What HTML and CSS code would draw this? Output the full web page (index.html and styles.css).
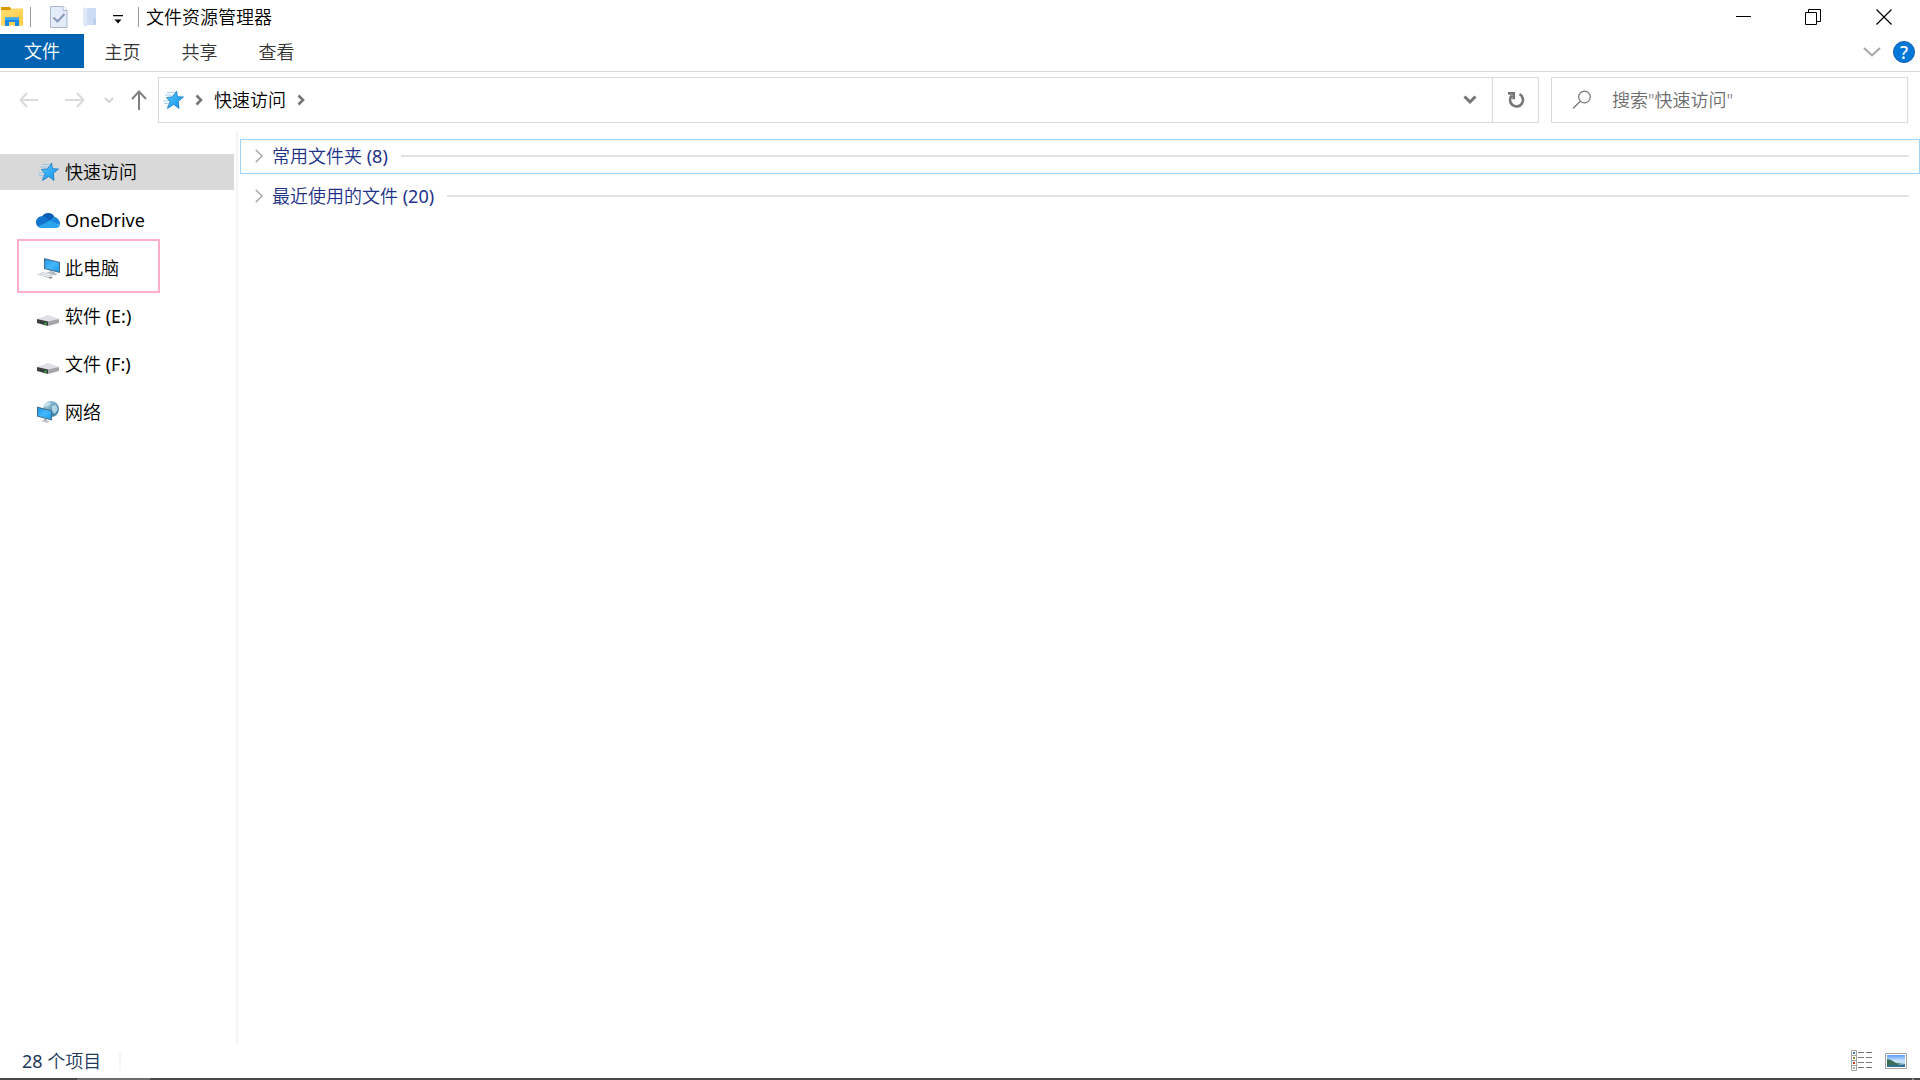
FILE: index.html
```html
<!DOCTYPE html>
<html lang="zh-CN">
<head>
<meta charset="utf-8">
<title>文件资源管理器</title>
<link rel="stylesheet" href="styles.css">
</head>
<body>
<svg class="defs" width="0" height="0" aria-hidden="true">
  <defs>
    <linearGradient id="starFill" x1="0" y1="0" x2="1" y2="1"><stop offset="0" stop-color="#5ccbff"/><stop offset="1" stop-color="#0d8eea"/></linearGradient>
    <linearGradient id="screenFill" x1="0" y1="0" x2="1" y2="1"><stop offset="0" stop-color="#2196e8"/><stop offset=".5" stop-color="#45b8fb"/><stop offset="1" stop-color="#1c9bf0"/></linearGradient>
    <linearGradient id="globeFill" x1="0" y1="0" x2="1" y2="1"><stop offset="0" stop-color="#b9dcea"/><stop offset="1" stop-color="#1f6d98"/></linearGradient>
    <linearGradient id="folderFill" x1="0" y1="0" x2="1" y2="1"><stop offset="0" stop-color="#ffdf79"/><stop offset="1" stop-color="#ffc93c"/></linearGradient>
    <linearGradient id="skyFill" x1="0" y1="0" x2="0" y2="1"><stop offset="0" stop-color="#5a9df5"/><stop offset=".5" stop-color="#cfe8fa"/><stop offset="1" stop-color="#7fb8dd"/></linearGradient>
    <symbol id="star" viewBox="0 0 22 20">
      <path d="M5 2.500h7M3 5h8M1 11h6M2 13.500h5M4 16h3" stroke="#8fc3ea" stroke-width=".8"/>
      <path d="M14.500 1l1 5.700 6 .300-5.200 4.300.700 7.200-5.300-4-6.200 4 2.500-6.800L4.500 7.500l6.200-.700z" fill="url(#starFill)" stroke="#1778c2" stroke-width=".8"/>
    </symbol>
    <symbol id="drive" viewBox="0 0 22 12">
      <path d="M0 5L11 1l11 4-11 4z" fill="#dfe0e3"/>
      <path d="M0 5l11 2.500V12L0 9z" fill="#3c3d40"/>
      <path d="M11 7.500L22 5v4L11 12z" fill="#a4a5a9"/>
      <path d="M7.500 8.500h2v2h-2z" fill="#25c03a"/>
    </symbol>
    <symbol id="chevron" viewBox="0 0 8 12"><path d="M1.500 1.500L6 6l-4.500 4.500" fill="none" stroke="#757575" stroke-width="2.600"/></symbol>
    <symbol id="expand" viewBox="0 0 8 14"><path d="M.700.700L7 7 .700 13.300" fill="none" stroke="#a0a0a0" stroke-width="1.300"/></symbol>
  </defs>
</svg>
<div class="window">
  <header class="titlebar">
    <svg class="app-icon" width="23" height="20" viewBox="0 0 23 20">
      <path d="M1 0h9l2 3H1z" fill="#d99a00"/>
      <path d="M1 3h9l2-1.500h11V18.500H1z" fill="url(#folderFill)"/>
      <path d="M5 19v-8.500h14V19h-4v-4H9v4z" fill="#1a8ae2"/>
      <path d="M5 10.500h14V13H5z" fill="#41a9f2"/>
    </svg>
    <span class="rule"></span>
    <button class="quick check" aria-label="属性">
      <svg width="18" height="22" viewBox="0 0 18 22"><path d="M.5.500H13l4 4v17H.5z" fill="#e4ecf9" stroke="#aab6cf"/><path d="M13 .500v4h4" fill="#fff" stroke="#aab6cf"/><path d="M3.500 11.500l4 4L14.500 8" fill="none" stroke="#889bbd" stroke-width="2"/></svg>
    </button>
    <button class="quick folder" aria-label="新建文件夹">
      <svg width="15" height="20" viewBox="0 0 15 20"><path d="M5 1h9v17H5z" fill="#cddcf2"/><path d="M1 0l4 2v18l-4-2z" fill="#dfe8f7"/><path d="M11 11h3v7h-3z" fill="#bccfec"/></svg>
    </button>
    <button class="quick more" aria-label="自定义快速访问工具栏">
      <svg width="10" height="9" viewBox="0 0 10 9"><path d="M0 0h10v1.300H0zM1.500 4.500h7L5 8.500z" fill="#000"/></svg>
    </button>
    <span class="rule"></span>
    <h1 class="title">文件资源管理器</h1>
    <div class="controls">
      <button aria-label="最小化"><svg width="16" height="16"><path d="M0 7.500h15" stroke="#000"/></svg></button>
      <button aria-label="还原"><svg width="18" height="16" fill="none" stroke="#000"><path d="M.5 3.500h11v12H.5zM3.500 3.500v-3h12v12h-4"/></svg></button>
      <button aria-label="关闭"><svg width="16" height="16"><path d="M.5.500l15 15M15.500.500l-15 15" stroke="#000" stroke-width="1.200"/></svg></button>
    </div>
  </header>
  <nav class="ribbon">
    <button class="tab active">文件</button>
    <button class="tab">主页</button>
    <button class="tab">共享</button>
    <button class="tab">查看</button>
    <div class="ribbon-end">
      <button aria-label="展开功能区"><svg width="18" height="10"><path d="M1 1l8 7.500L17 1" fill="none" stroke="#a6a6a6" stroke-width="2"/></svg></button>
      <button class="help" aria-label="帮助">?</button>
    </div>
  </nav>
  <div class="toolbar">
    <div class="history">
      <button class="arrow" aria-label="后退"><svg width="20" height="16" fill="none" stroke="#dadada" stroke-width="2"><path d="M19 8H1.500M8 1L1.500 8 8 15"/></svg></button>
      <button class="arrow" aria-label="前进"><svg width="20" height="16" fill="none" stroke="#dadada" stroke-width="2"><path d="M0 8h18M12 1l6.500 7-6.500 7"/></svg></button>
      <button class="recent" aria-label="最近浏览的位置"><svg width="10" height="6" fill="none" stroke="#d4d4d4" stroke-width="2"><path d="M1 1l4 4 4-4"/></svg></button>
      <button class="up" aria-label="向上"><svg width="16" height="20" fill="none" stroke="#808080" stroke-width="2"><path d="M8 20V2M1 9l7-7.500L15 9"/></svg></button>
    </div>
    <div class="address">
      <svg width="22" height="20"><use href="#star"/></svg>
      <svg width="8" height="12"><use href="#chevron"/></svg>
      <a class="crumb" href="#quick">快速访问</a>
      <svg width="8" height="12"><use href="#chevron"/></svg>
      <button class="dropdown" aria-label="以前的位置"><svg width="14" height="10" fill="none" stroke="#757575" stroke-width="3"><path d="M1.500 1.500L7 7l5.500-5.500"/></svg></button>
      <button class="refresh" aria-label="刷新"><svg width="18" height="18" fill="none" stroke="#757575" stroke-width="2.600"><path d="M12.500 3.200A6.500 6.500 0 1 1 4.800 4.500"/><path d="M1 2.300h5.700v6" stroke-width="2.800"/></svg></button>
    </div>
    <label class="search">
      <svg width="20" height="20" fill="none" stroke="#777" stroke-width="1.200"><circle cx="12.500" cy="7" r="5.800"/><path d="M8.500 11L1 18.500"/></svg>
      <input type="text" aria-label="搜索" placeholder='搜索"快速访问"'>
    </label>
  </div>
  <div class="body">
    <nav class="sidebar">
      <a class="item selected" href="#quick"><span class="icon"><svg width="22" height="20"><use href="#star"/></svg></span>快速访问</a>
      <a class="item" href="#onedrive"><span class="icon"><svg width="24" height="16" viewBox="0 0 24 16"><path d="M6 4.500A7 7 0 0 1 18.500 5L14 9 5 8z" fill="#0b5cb5"/><path d="M6 4.300C2.500 4.300 0 7 0 10.300S2.500 16 5.500 16L15 9.300 10.500 5.800A8 8 0 0 0 6 4.300z" fill="#1274cf"/><path d="M18.500 5L13 8.500l6 3 5 1.500c.300-4-2-7.500-5.500-8z" fill="#1a86dd"/><path d="M2 14.500L14 8.700l9.800 4.500C23.300 15 22 16 20 16H5.500c-1.400 0-2.600-.600-3.500-1.500z" fill="#2aa4ea"/></svg></span><span class="latin">OneDrive</span></a>
      <a class="item framed" href="#pc"><span class="icon"><svg width="23" height="21" viewBox="0 0 23 21"><path d="M7 0l16 4v11L7 11z" fill="#476a85"/><path d="M8 1.200l14 3.500v9L8 10.200z" fill="url(#screenFill)"/><path d="M13 13l5 1.500v2.500l-5-1z" fill="#9aa5ad"/><path d="M9 14.500l4-1 8 2.500-3 1.500z" fill="#b8bfc4"/><path d="M0 16.500L6 14l10 3-5 3z" fill="#c5cbd0"/><path d="M2 16.500l11 2M5 15.200l9 2" stroke="#f1f3f5"/><path d="M11 19.500l3-1 2 1-3 1.500z" fill="#8f9aa2"/></svg></span>此电脑</a>
      <a class="item" href="#e"><span class="icon low"><svg width="22" height="12"><use href="#drive"/></svg></span><span>软件 <span class="latin">(E:)</span></span></a>
      <a class="item" href="#f"><span class="icon low"><svg width="22" height="12"><use href="#drive"/></svg></span><span>文件 <span class="latin">(F:)</span></span></a>
      <a class="item" href="#network"><span class="icon"><svg width="22" height="22" viewBox="0 0 22 22"><circle cx="14" cy="8" r="8" fill="url(#globeFill)"/><path d="M7 4c2-3 5-3 7-2l-2 3-4 1zM15 5l4-1 2 4-3 5-3-3z" fill="#e1f1f6" opacity=".65"/><path d="M0 5.500l15 4v10L0 15.500z" fill="#416e8f"/><path d="M1 6.900l13 3.400v8L1 14.800z" fill="url(#screenFill)"/><path d="M7 17.500l3 1v1.500H7z" fill="#9aa5ad"/><path d="M4 20l3-1 6 1.500-3 1.500z" fill="#c0c6ca"/></svg></span>网络</a>
    </nav>
    <main class="content">
      <button class="group focused"><svg width="8" height="14"><use href="#expand"/></svg><span>常用文件夹 <span class="latin">(8)</span></span></button>
      <button class="group"><svg width="8" height="14"><use href="#expand"/></svg><span>最近使用的文件 <span class="latin">(20)</span></span></button>
    </main>
  </div>
  <footer class="status">
    <span class="count"><span class="latin">28</span> 个项目</span>
    <div class="views">
      <button aria-label="详细信息"><svg width="22" height="22" viewBox="0 0 22 22"><g fill="#fff" stroke="#a3a3a3"><path d="M.500.500h5v5h-5zM.500 5.500h5v5h-5zM.500 10.500h5v5h-5zM.500 15.500h5v5h-5z"/></g><path d="M2 2h2v2H2z" fill="#3b78c4"/><path d="M2 7h2v2H2z" fill="#8b8b31"/><path d="M2 12h2v2H2z" fill="#c33a1c"/><path d="M2 17h2v2H2z" fill="#8fb08a"/><path d="M7 2.500h6M15 2.500h6M7 7.500h6M15 7.500h6M7 12.500h6M15 12.500h6M7 17.500h6M15 17.500h6" stroke="#777"/></svg></button>
      <button aria-label="大图标"><svg width="22" height="16" viewBox="0 0 22 16"><path d="M.5.500h21v15H.5z" fill="#fff" stroke="#a3a3a3"/><path d="M2 2h18v12H2z" fill="url(#skyFill)"/><path d="M2 6l4 1 5 3 7 1-6 1H2z" fill="#3d6f57"/><path d="M2 12h14l4-1v3H2z" fill="#2f7192"/></svg></button>
    </div>
  </footer>
  <div class="taskbar-edge"><span class="lit"></span><span class="tick"></span></div>
</div>
</body>
</html>
```
FILE: styles.css
```css
* { box-sizing: border-box; }
body {
  margin: 0;
  background: #fff;
  color: #000;
  font: 350 18px/24px "Noto Sans", "Noto Sans CJK SC", sans-serif;
}
svg { display: block; flex: none; }
.defs { position: absolute; }
button {
  display: flex;
  align-items: center;
  justify-content: center;
  padding: 0;
  border: 0;
  background: none;
  color: inherit;
  font: inherit;
}
a { color: inherit; text-decoration: none; }
.latin { font-weight: 400; }

.window { display: flex; flex-direction: column; min-height: 100vh; }

.titlebar { display: flex; align-items: center; height: 34px; }
.rule { width: 1px; height: 20px; margin-left: 7px; background: #9a9a9a; }
.check { margin-left: 19px; }
.folder { margin-left: 14px; }
.more { margin: 4px 8px 0 16px; }
.title { margin: 0 0 0 7px; font-size: 18px; font-weight: inherit; }
.controls { display: flex; height: 100%; margin-left: auto; padding-right: 1px; }
.controls button { width: 70px; }

.ribbon {
  display: flex;
  height: 38px;
  padding-bottom: 3px;
  border-bottom: 1px solid #dadada;
}
.tab { width: 77px; padding-top: 2px; color: #333; }
.tab.active { width: 84px; padding-top: 0; background: #0063b1; color: #fff; }
.ribbon-end { display: flex; align-items: center; gap: 12px; margin-left: auto; padding: 2px 5px 0 0; }
.help {
  width: 22px;
  height: 22px;
  border: 1px solid #0a5cab;
  border-radius: 50%;
  background: #0078d7;
  color: #fff;
  font-size: 18px;
  font-weight: 500;
}

.toolbar { display: flex; height: 46px; margin: 5px 12px 0 0; }
.history { display: flex; align-items: center; width: 158px; padding-left: 19px; }
.arrow { margin-right: 26px; }
.recent { margin-right: 17px; margin-left: -7px; }
.address {
  display: flex;
  flex: 1;
  align-items: center;
  gap: 11px;
  padding-left: 3px;
  border: 1px solid #d9d9d9;
}
.dropdown { width: 44px; height: 100%; margin-left: auto; }
.refresh { width: 46px; height: 100%; margin-left: -11px; border-left: 1px solid #d9d9d9; }
.search {
  display: flex;
  align-items: center;
  gap: 20px;
  width: 357px;
  margin-left: 12px;
  padding-left: 20px;
  border: 1px solid #d9d9d9;
}
.search input {
  flex: 1;
  min-width: 0;
  padding: 0;
  border: 0;
  outline: 0;
  background: none;
  font: inherit;
}
.search input::placeholder { color: #6d6d6d; opacity: 1; }

.body { display: flex; flex: 1; padding-top: 7px; }
.sidebar {
  display: flex;
  flex-direction: column;
  gap: 12px;
  width: 238px;
  padding: 24px 2px 0 0;
  border-right: 2px solid #f5f5f5;
}
.item { display: flex; position: relative; align-items: center; height: 36px; padding-left: 36px; }
.item.selected { background: #d9d9d9; }
.item.framed::after {
  content: "";
  position: absolute;
  inset: -11px 74px -7px 17px;
  border: 2px solid #ffaec9;
}
.icon { display: flex; justify-content: center; width: 24px; margin-right: 5px; }
.icon.low { padding-top: 8px; }

.content { display: flex; flex: 1; flex-direction: column; gap: 5px; padding: 9px 0 0 2px; }
.group {
  gap: 9px;
  height: 35px;
  padding: 0 10px 2px 14px;
  border: 1px solid transparent;
  color: #1e3287;
}
.group::after { content: ""; flex: 1; height: 2px; margin-left: 4px; background: #e2e2e2; }
.group.focused { border-color: #99d1ff; }

.status { display: flex; align-items: center; height: 34px; padding: 0 13px 0 22px; color: #1e395b; }
.count { padding-right: 18px; border-right: 2px solid #f5f5f5; line-height: 18px; }
.views { display: flex; align-items: center; gap: 12px; margin-left: auto; }

.taskbar-edge { display: flex; height: 2px; padding: 0 6px 0 77px; background: #484848; }
.lit { width: 73px; background: #6c6c6c; }
.tick { width: 2px; margin-left: auto; background: #8a8a8a; }
```
